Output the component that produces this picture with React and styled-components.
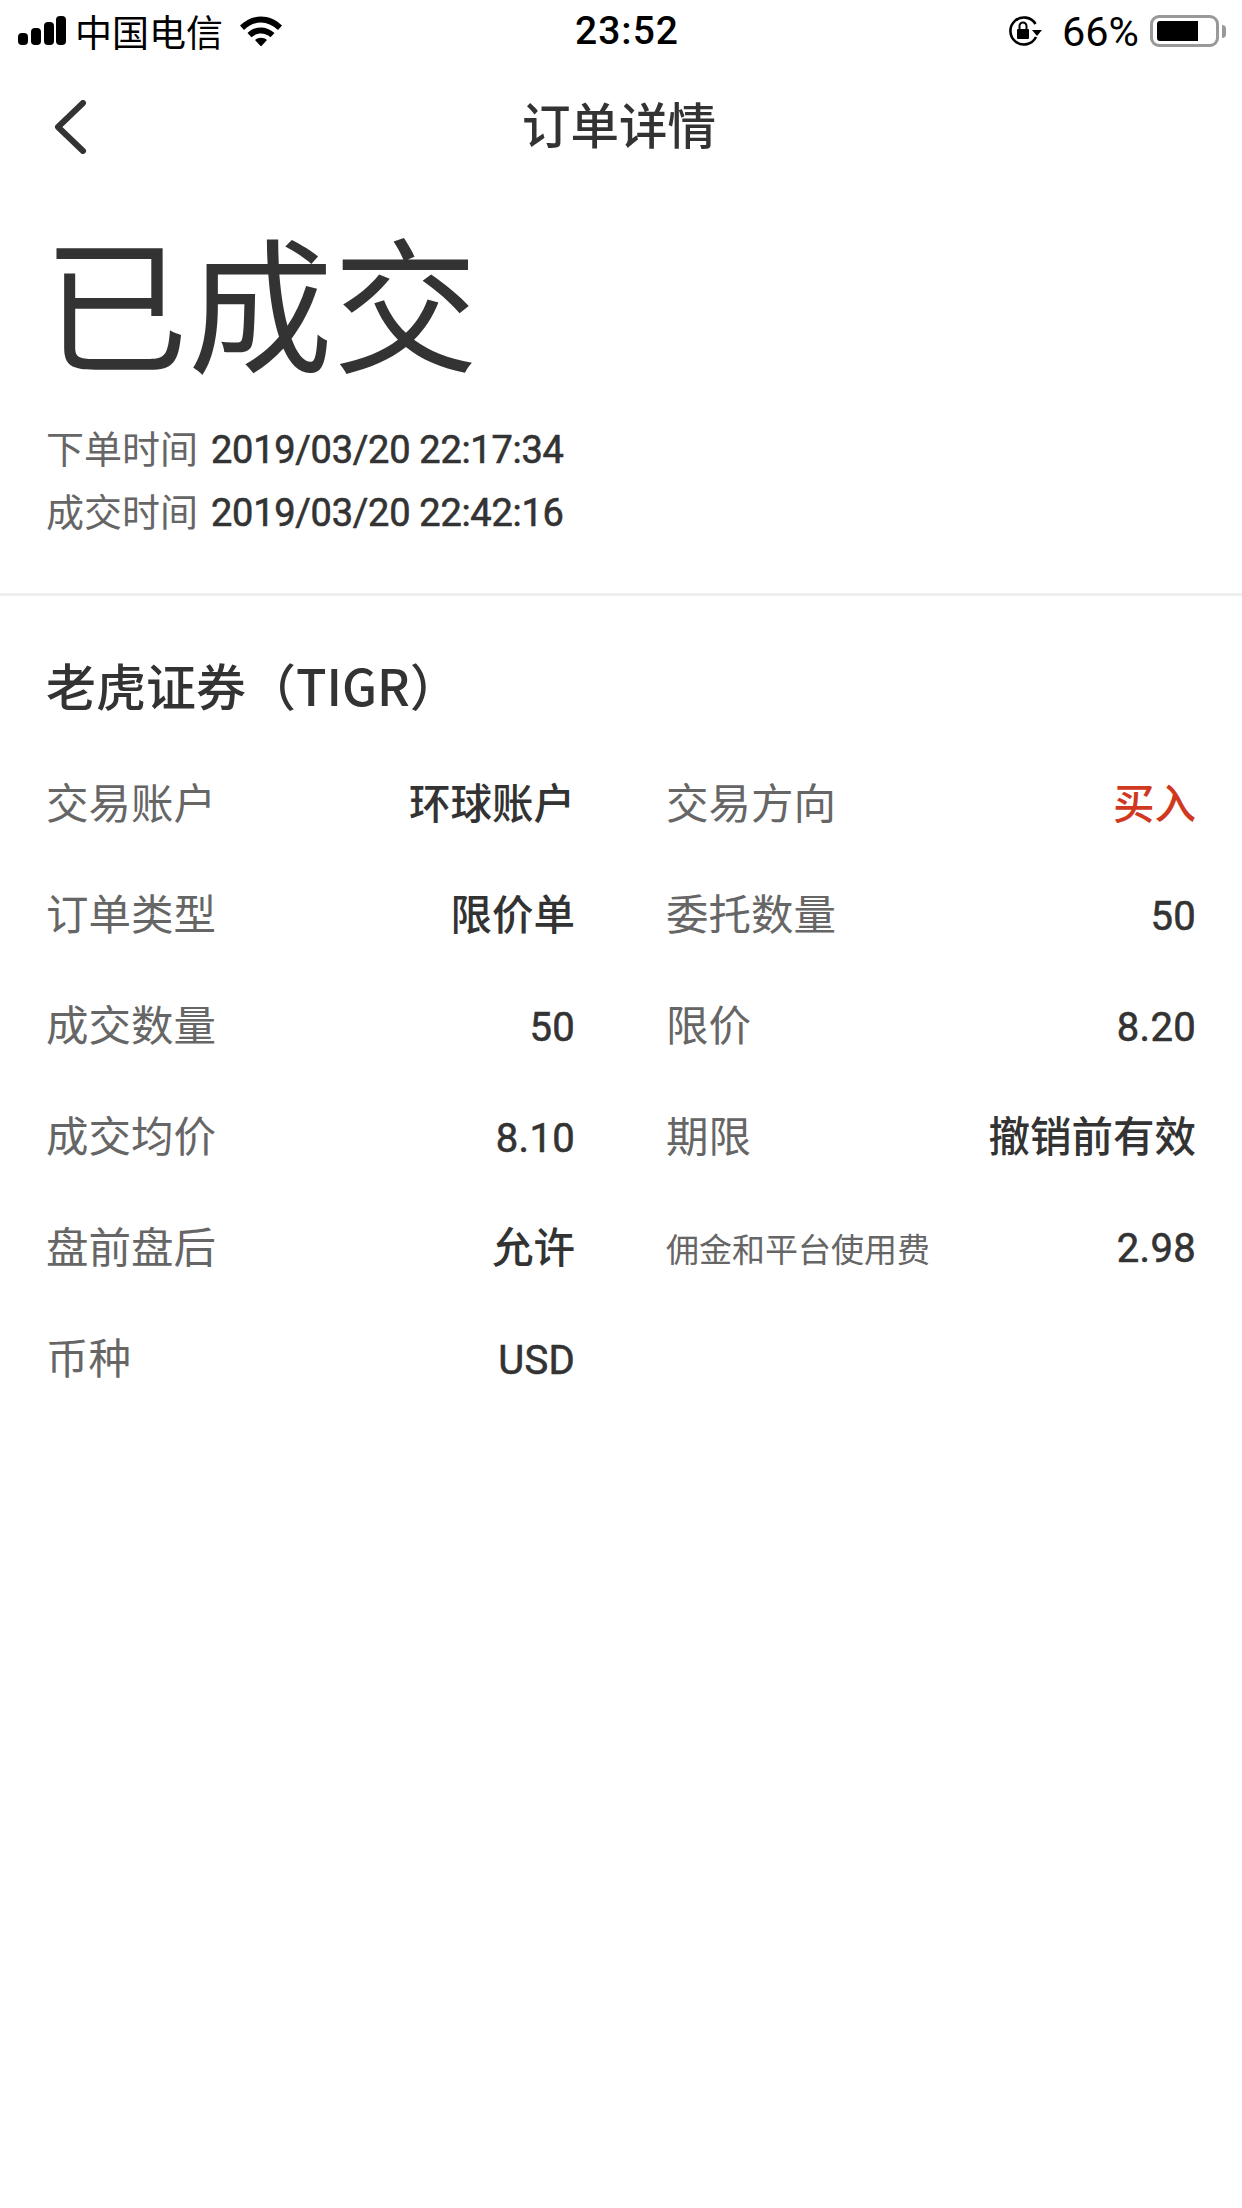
import React from "react";
import styled, { createGlobalStyle } from "styled-components";

const rows = [
  { left: ["交易账户", "环球账户", true], right: ["交易方向", "买入", true, "red"] },
  { left: ["订单类型", "限价单", true], right: ["委托数量", "50"] },
  { left: ["成交数量", "50"], right: ["限价", "8.20"] },
  { left: ["成交均价", "8.10"], right: ["期限", "撤销前有效", true] },
  { left: ["盘前盘后", "允许", true], right: ["佣金和平台使用费", "2.98", false, null, true] },
  { left: ["币种", "USD"] },
];

const Field = ({ data }) => {
  if (!data) return <Cell />;
  const [label, value, cjk, tone, small] = data;
  return (
    <Cell>
      <Label $small={small}>{label}</Label>
      <Value $cjk={cjk} $tone={tone}>{value}</Value>
    </Cell>
  );
};

const App = () => {
  return (
    <Page>
      <GlobalStyle />
      <StatusBar>
        <StatusLeft>
          <Signal viewBox="0 0 48 30">
            <rect x="0" y="17" width="10" height="12" rx="4" />
            <rect x="13" y="12" width="10" height="17" rx="4" />
            <rect x="26" y="6" width="10" height="23" rx="4" />
            <rect x="38" y="0" width="10" height="29" rx="4" />
          </Signal>
          <Carrier>中国电信</Carrier>
          <Wifi viewBox="0 0 42 30">
            <path d="M0 9.500C12-2.500 30-2.500 42 9.500l-4 4.500C27.500 4 14.500 4 4 14z" />
            <path d="M7.500 17c8-7.500 19-7.500 27 0l-4 4.300c-5.800-5-13.200-5-19 0z" />
            <path d="M15 24c3.500-3 8.500-3 12 0l-6 6.500z" />
          </Wifi>
        </StatusLeft>
        <Clock>23:52</Clock>
        <StatusRight>
          <RotationLock viewBox="0 0 34 32">
            <path d="M28 22A13.500 13.500 0 1 1 27.500 9" fill="none" stroke="#000" strokeWidth="2.600" />
            <path d="M24 15h10l-5 6z" />
            <rect x="9" y="14" width="12" height="10" rx="1" />
            <path d="M11.500 14v-3a3.500 3.500 0 0 1 7 0v3" fill="none" stroke="#000" strokeWidth="2" />
          </RotationLock>
          <Percent>66%</Percent>
          <Battery>
            <BatteryFill />
          </Battery>
          <BatteryCap />
        </StatusRight>
      </StatusBar>

      <NavBar>
        <BackIcon viewBox="0 0 34 54">
          <path d="M30 3 5 27l25 24" />
        </BackIcon>
        <NavTitle>订单详情</NavTitle>
      </NavBar>

      <Summary>
        <StatusTitle>已成交</StatusTitle>
        <TimeRow>
          <TimeLabel>下单时间</TimeLabel>
          <TimeValue>2019/03/20 22:17:34</TimeValue>
        </TimeRow>
        <TimeRow>
          <TimeLabel>成交时间</TimeLabel>
          <TimeValue>2019/03/20 22:42:16</TimeValue>
        </TimeRow>
      </Summary>

      <Details>
        <SectionTitle>老虎证券（TIGR）</SectionTitle>
        <Grid>
          {rows.map((row) => (
            <React.Fragment key={row.left[0]}>
              <Field data={row.left} />
              <Field data={row.right} />
            </React.Fragment>
          ))}
        </Grid>
      </Details>
    </Page>
  );
};

export default App;

const cjk = `"Noto Sans CJK SC", sans-serif`;
const digits = `"Roboto", "Noto Sans CJK SC", sans-serif`;

const GlobalStyle = createGlobalStyle`
  html, body {
    margin: 0;
    padding: 0;
    background: #fff;
  }
`;

const Page = styled.div`
  width: 1242px;
  height: 2208px;
  background: #fff;
  overflow: hidden;
  font-family: ${cjk};
  color: #333;
`;

const StatusBar = styled.div`
  height: 62px;
  padding: 0 16px 0 18px;
  display: grid;
  grid-template-columns: 1fr auto 1fr;
  align-items: center;
  color: #000;
`;

const StatusLeft = styled.div`
  display: flex;
  align-items: center;
`;

const Signal = styled.svg`
  width: 48px;
  height: 30px;
  fill: #000;
`;

const Carrier = styled.span`
  margin-left: 9px;
  font-size: 37px;
  line-height: 44px;
`;

const Wifi = styled.svg`
  width: 42px;
  height: 30px;
  margin-left: 17px;
  fill: #000;
`;

const Clock = styled.span`
  margin-left: 10px;
  font-family: "Roboto", sans-serif;
  font-size: 39px;
  font-weight: 500;
  letter-spacing: 1px;
`;

const StatusRight = styled.div`
  display: flex;
  align-items: center;
  justify-content: flex-end;
`;

const RotationLock = styled.svg`
  width: 34px;
  height: 32px;
  fill: #000;
`;

const Percent = styled.span`
  margin-left: 20px;
  font-family: "Roboto", sans-serif;
  font-size: 41.500px;
`;

const Battery = styled.div`
  box-sizing: border-box;
  width: 69px;
  height: 32px;
  margin-left: 11px;
  padding: 3px 4px;
  border: 3px solid #999;
  border-radius: 9px;
`;

const BatteryFill = styled.div`
  width: 41px;
  height: 20px;
  background: #000;
  border-radius: 3px 0 0 3px;
`;

const BatteryCap = styled.div`
  width: 4px;
  height: 13px;
  margin-left: 3px;
  background: #999;
  border-radius: 0 4px 4px 0;
`;

const NavBar = styled.div`
  position: relative;
  height: 122px;
  display: flex;
  align-items: center;
  justify-content: center;
`;

const BackIcon = styled.svg`
  position: absolute;
  left: 53px;
  top: 38px;
  width: 34px;
  height: 54px;
  fill: none;
  stroke: #333;
  stroke-width: 6;
  stroke-linecap: round;
  stroke-linejoin: round;
`;

const NavTitle = styled.h1`
  margin: 0 0 0 -4px;
  font-size: 48.500px;
  line-height: 60px;
  font-weight: 500;
  color: #333;
`;

const Summary = styled.section`
  padding: 25px 46px 52px;
  border-bottom: 3px solid #eee;
`;

const StatusTitle = styled.div`
  margin: 0 0 26px -3px;
  font-size: 145px;
  line-height: 180px;
  font-weight: 400;
  color: #333;
`;

const TimeRow = styled.div`
  height: 63px;
  display: flex;
  align-items: baseline;
  font-size: 38px;
  line-height: 63px;
`;

const TimeLabel = styled.span`
  color: #666;
`;

const TimeValue = styled.span`
  margin-left: 13px;
  font-family: ${digits};
  font-weight: 400;
  letter-spacing: -0.300px;
  -webkit-text-stroke: 0.600px #333;
  color: #333;
`;

const Details = styled.section`
  padding: 56px 46px 0;
`;

const SectionTitle = styled.h2`
  margin: 0 0 29px;
  font-size: 50px;
  line-height: 64px;
  font-weight: 500;
  color: #333;
`;

const Grid = styled.div`
  display: grid;
  grid-template-columns: 529px 530px;
  column-gap: 91px;
  grid-auto-rows: 111px;
`;

const Cell = styled.div`
  display: flex;
  align-items: baseline;
  justify-content: space-between;
  line-height: 111px;
`;

const Label = styled.span`
  padding-top: ${(p) => (p.$small ? "4px" : "0")};
  font-size: ${(p) => (p.$small ? "33px" : "42.500px")};
  color: #666;
`;

const Value = styled.span`
  font-family: ${(p) => (p.$cjk ? cjk : digits)};
  font-size: ${(p) => (p.$cjk ? "41.500px" : "40px")};
  font-weight: ${(p) => (p.$cjk ? 500 : 400)};
  letter-spacing: ${(p) => (p.$cjk ? "0" : "0.300px")};
  -webkit-text-stroke: ${(p) => (p.$cjk ? "0" : "0.600px")};
  color: ${(p) => (p.$tone === "red" ? "#d0391f" : "#333")};
`;
